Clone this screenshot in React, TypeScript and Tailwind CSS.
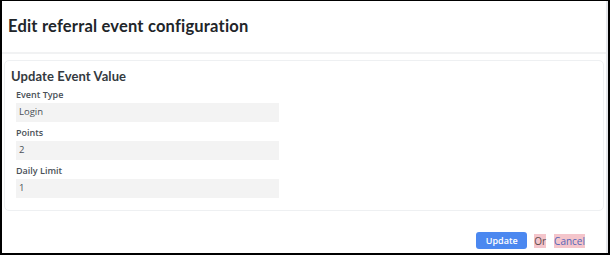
export default function App() {
  const fields = [
    { label: 'Event Type', value: 'Login' },
    { label: 'Points', value: '2' },
    { label: 'Daily Limit', value: '1' },
  ];

  return (
    <div className="h-[256px] w-[611px] overflow-hidden bg-white" style={{ fontFamily: '"Open Sans", Arial, sans-serif' }}>
      <div className="flex h-[255px] w-[610px] flex-col border-b-2 border-l-2 border-r-2 border-t border-black">
        <div className="flex h-full flex-col border-r-2 border-[#e5e7eb]">
          {/* Header */}
          <div className="flex h-[53px] items-center border-b-2 border-[#f1f2f3] pl-[6px]">
            <h1 className="font-['Lato',sans-serif] text-[16.5px] font-bold tracking-[0.2px] text-[#212529]">
              Edit referral event configuration
            </h1>
          </div>

          {/* Body */}
          <div className="px-[2px] pt-[6px]">
            <div className="h-[151px] rounded-[5px] border border-[#eef0f2] pl-[6px] pr-3 pt-[6px]">
              <h2 className="font-['Lato',sans-serif] text-[13px] font-bold leading-[18px] tracking-[0.1px] text-[#343a40]">
                Update Event Value
              </h2>
              <div className="flex flex-col gap-[3px] pl-[5px] pt-[2px]">
                {fields.map((f) => (
                  <div key={f.label} className="flex flex-col">
                    <label className="text-[9px] font-semibold leading-[16px] text-[#495057]">{f.label}</label>
                    <div className="flex h-[19px] w-[263px] items-center bg-[#f3f3f3] px-[3px] text-[9.5px] text-[#495057]">
                      {f.value}
                    </div>
                  </div>
                ))}
              </div>
            </div>
          </div>

          {/* Footer */}
          <div className="mt-auto flex items-center justify-end pb-[4px] pr-[21px]">
            <button className="h-[17px] w-[51px] rounded-[3px] bg-[#4b88f0] text-[9px] font-semibold text-white">Update</button>
            <span className="ml-[7px] bg-[#f4c5cb] text-[10px] leading-[14px] text-[#5e4b4b]">Or</span>
            <a className="ml-[8px] bg-[#f4c5cb] text-[10px] leading-[14px] text-[#5466b8]">Cancel</a>
          </div>
        </div>
      </div>
    </div>
  );
}
